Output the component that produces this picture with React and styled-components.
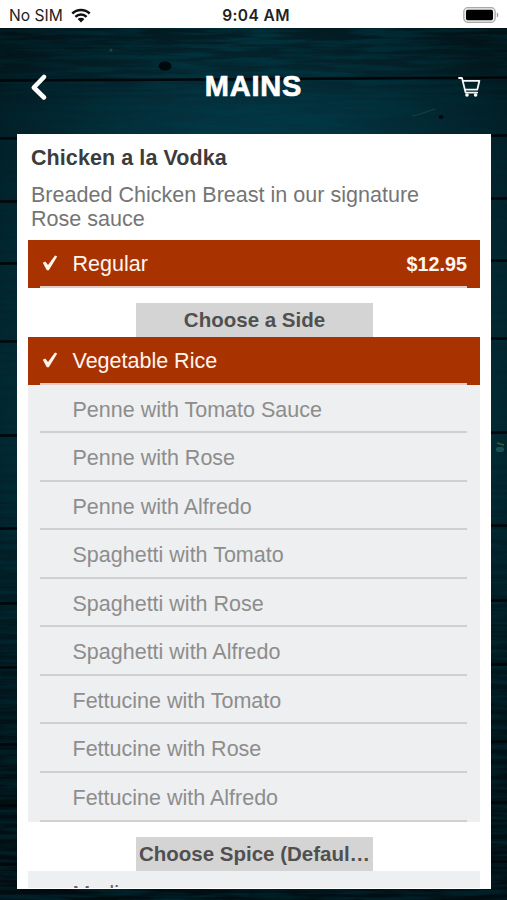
import React from 'react';
import styled, { createGlobalStyle } from 'styled-components';

const GlobalStyle = createGlobalStyle`
  * {
    box-sizing: border-box;
  }
  body {
    margin: 0;
    background: #02141c;
    font-family: "Liberation Sans", Arial, sans-serif;
  }
`;

const Screen = styled.div`
  position: relative;
  width: 507px;
  height: 900px;
  overflow: hidden;
  display: flex;
  flex-direction: column;
`;

const Backdrop = styled.svg`
  position: absolute;
  inset: 0;
  z-index: -1;
`;

const StatusBar = styled.div`
  flex: none;
  height: 28px;
  padding: 2px 8px 0 9px;
  display: grid;
  grid-template-columns: 1fr auto 1fr;
  align-items: center;
  background: #fff;
  color: #222;
  font-family: Inter, sans-serif;
  font-size: 15.6px;
`;

const Carrier = styled.div`
  display: flex;
  align-items: center;
  gap: 8px;
`;

const Clock = styled.div`
  padding-left: 4px;
  font-size: 15.5px;
  font-weight: 600;
  letter-spacing: 0.4px;
`;

const Battery = styled.svg`
  justify-self: end;
`;

const NavBar = styled.div`
  flex: none;
  height: 106px;
  padding: 11px 26px 0 30px;
  display: grid;
  grid-template-columns: 1fr auto 1fr;
  align-items: center;
`;

const NavTitle = styled.h1`
  margin: 0;
  padding: 0 4px 1px 0;
  color: #fff;
  font-size: 29px;
  line-height: 34px;
  letter-spacing: 0.8px;
  -webkit-text-stroke: 0.7px #fff;
  stroke-linejoin: round;
`;

const CartIcon = styled.svg`
  justify-self: end;
`;

const Card = styled.div`
  flex: none;
  width: 474px;
  height: 755px;
  margin-left: 17px;
  padding: 11px 11px 2px;
  overflow: hidden;
  display: flex;
  flex-direction: column;
  background: #fff;
`;

const DishName = styled.h2`
  margin: 0 3px;
  color: #3c3c3c;
  font-size: 21.5px;
  line-height: 26px;
  letter-spacing: 0.08px;
`;

const Description = styled.p`
  margin: 12px 40px 9.5px 3px;
  color: #757575;
  font-size: 21.55px;
  line-height: 23.5px;
`;

const List = styled.div`
  flex: none;
  background: #edeff0;
`;

const Row = styled.div`
  height: 48.55px;
  padding: 0 13px 0 12px;
  display: flex;
  flex-direction: column;
  background: ${({ $selected }) => ($selected ? '#a93300' : 'transparent')};
  color: ${({ $selected }) => ($selected ? '#fff5ef' : '#8d8d8d')};
  font-size: 21.5px;
`;

const RowBody = styled.div`
  flex: 1;
  padding-top: 4px;
  display: grid;
  grid-template-columns: 32.5px 1fr auto;
  align-items: center;
`;

const CheckIcon = styled.svg`
  display: block;
  margin: 0 0 3px 2px;
`;

const Divider = styled.div`
  height: 2px;
  margin-bottom: 0.5px;
  background: ${({ $light }) => ($light ? '#e3ccc6' : '#cfd0d2')};
`;

const Price = styled.span`
  font-size: 19.8px;
  font-weight: 700;
`;

const Tab = styled.div`
  flex: none;
  align-self: center;
  width: 237px;
  height: 33.5px;
  margin: 15px 0 0 1px;
  color: #505050;
  background: #d4d4d4;
  font-size: 20.5px;
  font-weight: 700;
  line-height: 34px;
  text-align: center;
  white-space: nowrap;
`;

const NextList = styled(List)`
  height: 17px;
  overflow: hidden;
`;

const NextLabel = styled.div`
  padding: 10px 0 0 44.5px;
  color: #626262;
  font-size: 21.5px;
  line-height: 26px;
`;

const sides = [
  'Vegetable Rice',
  'Penne with Tomato Sauce',
  'Penne with Rose',
  'Penne with Alfredo',
  'Spaghetti with Tomato',
  'Spaghetti with Rose',
  'Spaghetti with Alfredo',
  'Fettucine with Tomato',
  'Fettucine with Rose',
  'Fettucine with Alfredo',
];

// y of the gaps between planks
const seams = [79, 137, 200, 262, 340, 434, 527, 602, 666, 743, 804, 863];

const Wood = () => (
  <Backdrop width="507" height="900" viewBox="0 0 507 900">
    <defs>
      <linearGradient id="wood" x1="0" y1="0" x2="0" y2="1">
        <stop offset="0" stopColor="#031a22" />
        <stop offset="0.07" stopColor="#042832" />
        <stop offset="0.12" stopColor="#043341" />
        <stop offset="0.5" stopColor="#03343f" />
        <stop offset="0.72" stopColor="#03232d" />
        <stop offset="1" stopColor="#02161e" />
      </linearGradient>
      <radialGradient id="shade" cx="0.5" cy="0.45" r="0.62">
        <stop offset="0.5" stopColor="#000" stopOpacity="0" />
        <stop offset="1" stopColor="#000" stopOpacity="0.45" />
      </radialGradient>
      <filter id="grain" x="0" y="0" width="100%" height="100%">
        <feTurbulence type="fractalNoise" baseFrequency="0.014 0.2" numOctaves="4" seed="8" />
        <feColorMatrix values="0 0 0 0 0  0 0 0 0 0.04  0 0 0 0 0.06  3.4 0 0 0 -1.3" />
      </filter>
    </defs>
    <rect width="507" height="900" fill="url(#wood)" />
    <rect width="507" height="900" filter="url(#grain)" />
    <rect width="507" height="900" fill="url(#shade)" />
    {seams.map((y) => (
      <path key={y} d={`M0 ${y + 1.5}L200 ${y + 0.5}L507 ${y - 1.5}`} stroke="#000609" strokeWidth="2.6" fill="none" />
    ))}
    <ellipse cx="165" cy="66" rx="6.5" ry="4.5" fill="#00090c" />
    <circle cx="111" cy="50" r="1.6" fill="#24423a" />
    <path d="M412 116l8-2 15-5" stroke="#12423f" strokeWidth="1.2" fill="none" />
    <ellipse cx="441" cy="117" rx="2.5" ry="2" fill="#00090c" />
    <path d="M497 443l7 2" stroke="#49562b" strokeWidth="1.4" />
    <rect x="496" y="447" width="8" height="5" rx="2" fill="#155052" />
  </Backdrop>
);

const Check = () => (
  <CheckIcon width="16" height="18" viewBox="0 0 16 18">
    <path d="M0.8 8.8L3.3 7.4L6 11.1L13 1.4L15.2 2.6L6.8 16.2H4.8Z" fill="#fff6e8" />
  </CheckIcon>
);

const Option = ({ name, price, selected }) => (
  <Row $selected={selected}>
    <RowBody>
      <span>{selected && <Check />}</span>
      <span>{name}</span>
      {price && <Price>{price}</Price>}
    </RowBody>
    <Divider $light={selected} />
  </Row>
);

const App = () => {
  return <>
    <GlobalStyle />
    <Screen>
      <Wood />
      <StatusBar>
        <Carrier>
          <span>No SIM</span>
          <svg width="20" height="15" viewBox="0 0 20 15">
            <g fill="none" stroke="#111" strokeWidth="2.5">
              <path d="M1.3 5.5A12.4 12.4 0 0 1 18.7 5.5" />
              <path d="M4.4 8.8A8 8 0 0 1 15.6 8.8" />
            </g>
            <path d="M6.6 11A4.9 4.9 0 0 1 13.4 11L10 14.5Z" fill="#111" />
          </svg>
        </Carrier>
        <Clock>9:04 AM</Clock>
        <Battery width="36" height="17" viewBox="0 0 36 17">
          <rect x="0.8" y="0.7" width="31.4" height="14.6" rx="4" fill="#eee" stroke="#aaa" strokeWidth="1.3" />
          <rect x="3" y="2.8" width="27" height="10.4" rx="1.6" fill="#000" />
          <path d="M33.8 5.5v5c2-.8 2-4.2 0-5z" fill="#999" />
        </Battery>
      </StatusBar>
      <NavBar>
        <svg width="18" height="28" viewBox="0 0 18 28">
          <path d="M14 4L3.8 14.5L14 24.5" fill="none" stroke="#fff" strokeWidth="4.6" strokeLinecap="round" strokeLinejoin="round" />
        </svg>
        <NavTitle>MAINS</NavTitle>
        <CartIcon width="23" height="21" viewBox="0 0 23 21">
          <g fill="none" stroke="#f2f6f7" strokeWidth="1.8" strokeLinejoin="round" strokeLinecap="round">
            <path d="M1 2H4L7.6 16.6H19.2" />
            <path d="M5 4.8H21.4L19.3 13.6H7.2" />
          </g>
          <circle cx="9" cy="19" r="1.8" fill="#fff" />
          <circle cx="17.6" cy="19" r="1.8" fill="#fff" />
        </CartIcon>
      </NavBar>
      <Card>
        <DishName>Chicken a la Vodka</DishName>
        <Description>Breaded Chicken Breast in our signature Rose sauce</Description>
        <List>
          <Option name="Regular" price="$12.95" selected />
        </List>
        <Tab>Choose a Side</Tab>
        <List>
          {sides.map((side, i) => (
            <Option key={side} name={side} selected={i === 0} />
          ))}
        </List>
        <Tab>Choose Spice (Defaul…</Tab>
        <NextList>
          <NextLabel>Medium</NextLabel>
        </NextList>
      </Card>
    </Screen>
  </>
};

export default App;
